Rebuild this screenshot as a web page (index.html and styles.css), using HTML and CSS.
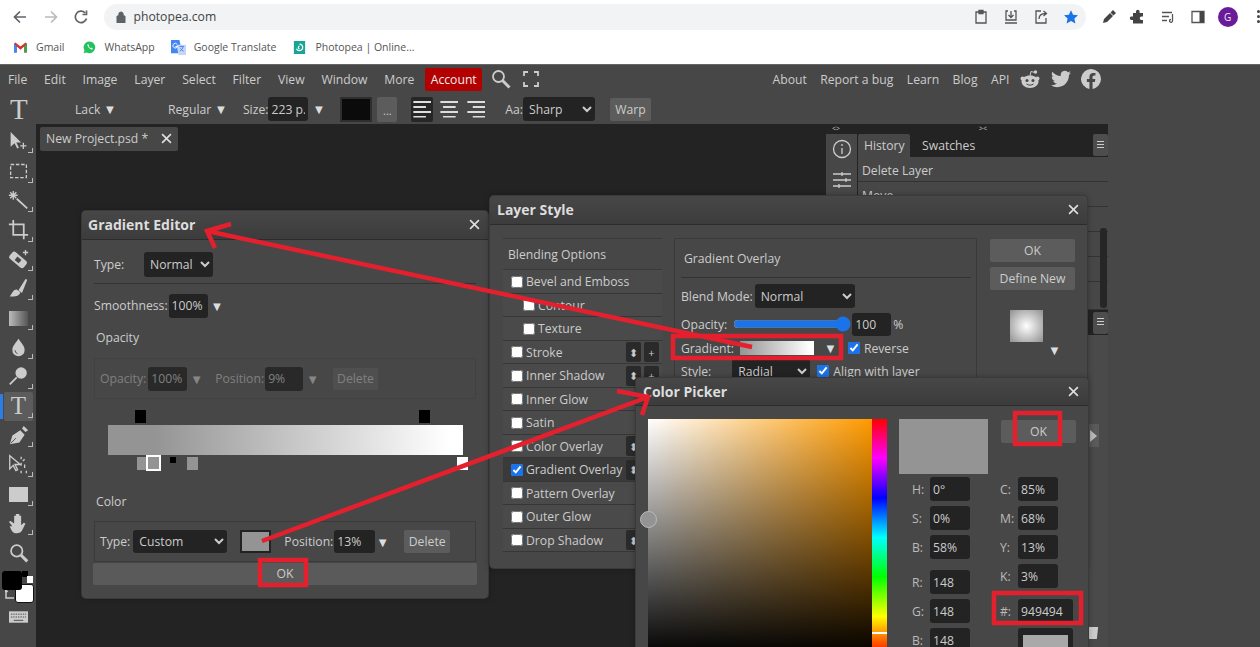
FILE: index.html
```html
<!DOCTYPE html>
<html lang="en">
<head>
<meta charset="utf-8">
<title>Photopea</title>
<link rel="stylesheet" href="styles.css">
</head>
<body>
<div class="page">
  <header class="chrome">
    <div class="navrow">
      <svg class="nav" viewBox="0 0 16 16"><path d="M14 8H3M8 2.500 2.500 8 8 13.500" class="navp"/></svg>
      <svg class="nav nav-off" viewBox="0 0 16 16"><path d="M2 8h11M8 2.500 13.500 8 8 13.500" class="navp"/></svg>
      <svg class="nav" viewBox="0 0 16 16"><path d="M13.500 9.500A5.700 5.700 0 1 1 12 3.800M13.500 1.500v4h-4" class="navp"/></svg>
      <div class="omnibox">
        <svg class="lock" viewBox="0 0 10 12"><path d="M1 5h8v7H1zM2.800 5V3.200a2.200 2.200 0 0 1 4.400 0V5" fill="#5f6368" stroke="#5f6368"/></svg>
        <span class="url">photopea.com</span>
        <span class="grow"></span>
        <svg class="omni-i" viewBox="0 0 16 16"><path d="M3 3h10v11H3zM6 1.500h4v3H6z" class="ico-line"/></svg>
        <svg class="omni-i" viewBox="0 0 16 16"><path d="M5 2H3v9h10V2h-2M8 2v6M5.500 6 8 8.500 10.500 6M2 14h12" class="ico-line"/></svg>
        <svg class="omni-i" viewBox="0 0 16 16"><path d="M8 2H3v12h10V9M6 10c0-4 3-5.500 7-5.500M10.500 2l3 2.500-3 2.500" class="ico-line"/></svg>
        <svg class="omni-i" viewBox="0 0 16 16"><path d="m8 1.200 2.100 4.500 4.900.6-3.600 3.300 1 4.900L8 12.100l-4.400 2.400 1-4.900L1 6.300l4.900-.6z" fill="#1a73e8"/></svg>
      </div>
      <svg class="ext" viewBox="0 0 16 16"><path d="M2 14 3 10l6-6 3 3-6 6zM9.500 3.500 12 1l3 3-2.500 2.500z" fill="#444"/></svg>
      <svg class="ext" viewBox="0 0 16 16"><path d="M6 2.500a1.800 1.800 0 0 1 3.600 0V4H13v3.400h-1.500a1.800 1.800 0 0 0 0 3.600H13v3.500H3V11H1.500a1.800 1.800 0 0 1 0-3.600H3V4h3z" fill="#444"/></svg>
      <svg class="ext" viewBox="0 0 16 16"><path d="M2 3.500h10M2 7.500h7M2 11.500h5M12.500 5v6.500a1.500 1.500 0 1 1-1.500-1.200" class="ico-line"/></svg>
      <svg class="ext" viewBox="0 0 16 16"><path d="M2 2.500h12v11H2z" class="ico-line"/><path d="M9.500 2.500H14v11H9.500z" fill="#444"/></svg>
      <span class="avatar">G</span>
      <span class="dots"><i></i><i></i><i></i></span>
    </div>
    <div class="bookmarks">
      <span class="bm"><svg class="bm-i" viewBox="0 0 14 11"><path d="M0 1.500V11h3V4.500L7 8l4-3.500V11h3V1.500L12.500 0 7 4.500 1.500 0z" fill="#d93025"/><path d="M0 1.500V11h3V4z" fill="#4285f4"/><path d="M14 1.500V11h-3V4z" fill="#34a853"/></svg>Gmail</span>
      <span class="bm bm-wa"><svg class="bm-i" viewBox="0 0 14 14"><path d="M7 .5a6.300 6.300 0 0 0-5.400 9.600L.7 13.300l3.300-.9A6.300 6.300 0 1 0 7 .5z" fill="#25c15f"/><path d="M4.500 4c1 3 2.500 4.500 5.300 5.500l.7-1.500-1.600-1-.8.700C7.200 7.300 6.600 6.600 6 5.700l.7-.8-1-1.500z" fill="#fff"/></svg>WhatsApp</span>
      <span class="bm bm-gt"><svg class="bm-i wide" viewBox="0 0 16 16"><path d="M0 0h9l3 14H0z" fill="#4285f4"/><path d="M6 5h10v11H8z" fill="#c6d6f6"/><path d="M9 7h5M11.500 6v1M13 7c-.5 2-2 4-3.500 5M10 9c1 1.500 2 2.500 3.500 3" stroke="#4285f4" fill="none"/><path d="M6.500 4.500a2.500 2.500 0 1 0 .4 2.500H4.500" stroke="#fff" fill="none"/></svg>Google Translate</span>
      <span class="bm bm-pp"><svg class="bm-i" viewBox="0 0 13 15"><path d="M0 0h13v15H0z" fill="#18a497"/><path d="M6.500 3.500a3.800 3.800 0 1 1-3.500 5.500M6.500 6a1.500 1.500 0 1 0 .1 3" stroke="#fff" stroke-width="1.400" fill="none"/></svg>Photopea | Online...</span>
    </div>
  </header>

  <div class="app">
    <nav class="menu">
      <span class="mi">File</span><span class="mi">Edit</span><span class="mi">Image</span><span class="mi">Layer</span><span class="mi">Select</span><span class="mi">Filter</span><span class="mi">View</span><span class="mi">Window</span><span class="mi">More</span>
      <span class="account">Account</span>
      <svg class="m-search" viewBox="0 0 20 20"><circle cx="7.500" cy="7.500" r="5.500" class="lt-line2"/><path d="m11.500 11.500 7 7" class="lt-line3"/></svg>
      <svg class="m-full" viewBox="0 0 16 16"><path d="M1 5V1h4M11 1h4v4M15 11v4h-4M5 15H1v-4" class="lt-line2"/></svg>
      <span class="grow"></span>
      <span class="mr">About</span><span class="mr">Report a bug</span><span class="mr">Learn</span><span class="mr">Blog</span><span class="mr">API</span>
      <svg class="soc soc-r" viewBox="0 0 20 20"><path d="M10 6.500c-5 0-8.500 2.500-8.500 6S5 19 10 19s8.500-3 8.500-6.500-3.500-6-8.500-6z" fill="#ccc"/><circle cx="2.500" cy="9.500" r="2" fill="#ccc"/><circle cx="17.500" cy="9.500" r="2" fill="#ccc"/><circle cx="15.500" cy="3" r="1.700" fill="#ccc"/><path d="m10 7 1-4.500 4 1" stroke="#ccc" fill="none"/><circle cx="7" cy="11.500" r="1.500" fill="#474747"/><circle cx="13" cy="11.500" r="1.500" fill="#474747"/><path d="M6.500 15c2 1.500 5 1.500 7 0" stroke="#474747" fill="none"/></svg>
      <svg class="soc soc-t" viewBox="0 0 24 24"><path d="M23.950 4.570a10 10 0 0 1-2.820.77 4.960 4.960 0 0 0 2.160-2.720c-.95.550-2 .96-3.130 1.190a4.920 4.920 0 0 0-8.380 4.480C7.690 8.100 4.070 6.130 1.640 3.160a4.820 4.820 0 0 0-.67 2.480c0 1.710.87 3.210 2.190 4.100a4.900 4.900 0 0 1-2.230-.62v.06a4.920 4.920 0 0 0 3.950 4.830 5 5 0 0 1-2.210.08 4.940 4.940 0 0 0 4.600 3.420A9.870 9.870 0 0 1 0 19.540a14 14 0 0 0 7.560 2.210c9.050 0 14-7.500 14-13.980 0-.21 0-.42-.02-.63a9.940 9.940 0 0 0 2.410-2.570z" fill="#ccc"/></svg>
      <svg class="soc soc-f" viewBox="0 0 24 24"><path d="M24 12a12 12 0 1 0-13.880 11.850v-8.380H7.080V12h3.040V9.360c0-3 1.800-4.670 4.530-4.670 1.310 0 2.680.24 2.680.24v2.950h-1.500c-1.500 0-1.960.93-1.960 1.880V12h3.330l-.53 3.470h-2.800v8.380A12 12 0 0 0 24 12z" fill="#ccc"/></svg>
    </nav>

    <div class="options">
      <span class="big-t">T</span>
      <span class="o o-lack">Lack <span class="arr">▼</span></span>
      <span class="o o-reg">Regular <span class="arr">▼</span></span>
      <span class="o o-size">Size:</span>
      <input class="field o-sizeval" value="223 p.">
      <span class="arr tri">▼</span>
      <span class="colorbox"></span>
      <span class="morebtn">...</span>
      <span class="align on"><i class="al l"></i></span>
      <span class="align"><i class="al c"></i></span>
      <span class="align"><i class="al r"></i></span>
      <span class="o o-aa">Aa:</span>
      <select class="sel o-sharp"><option>Sharp</option></select>
      <span class="btn o-warp">Warp</span>
    </div>

    <div class="work">
      <aside class="tools">
        <span class="tool fly"><svg viewBox="0 0 24 24"><path d="M3 1v17l4.500-4 3 6 2-1-3-6H15z" class="f"/><path d="M14 17h7M17.500 13.500v7" class="s"/></svg></span>
        <span class="tool fly"><svg viewBox="0 0 24 24"><path d="M3 4h18v15H3z" class="dash"/></svg></span>
        <span class="tool fly"><svg viewBox="0 0 24 24"><path d="m10 10 12 11" class="s2"/><path d="M6 1v10M1 6h10M2.500 2.500l7 7M9.500 2.500l-7 7" class="s"/></svg></span>
        <span class="tool fly"><svg viewBox="0 0 24 24"><path d="M6 1v17h17M1 6h17v17" class="s2"/></svg></span>
        <span class="tool fly"><svg viewBox="0 0 24 24"><rect x="1" y="7.500" width="21" height="10" rx="3" class="f" transform="rotate(40 11.500 12.500)"/><path d="M8.500 10h6v5h-6z" fill="#474747" transform="rotate(40 11.500 12.500)"/><path d="M20 1v6M17 4h6" class="s"/></svg></span>
        <span class="tool fly"><svg viewBox="0 0 24 24"><path d="M12 14 20 1l2 1-6 15z" class="f"/><path d="M10 13c-4 0-5 4-8 8 6 1 12-1 12-5z" class="f"/></svg></span>
        <span class="tool fly"><span class="gradtool"></span></span>
        <span class="tool fly"><svg viewBox="0 0 24 24"><path d="M12 2c3 5 7 8 7 13a7 7 0 0 1-14 0c0-5 4-8 7-13z" class="f"/><path d="M8 15a4 4 0 0 0 3 4" stroke="#474747" fill="none"/></svg></span>
        <span class="tool fly"><svg viewBox="0 0 24 24"><circle cx="15" cy="8" r="6.500" class="f"/><path d="m10 13-8 8" class="s2"/></svg></span>
        <span class="tool fly active"><span class="t-glyph">T</span></span>
        <span class="tool fly"><svg viewBox="0 0 24 24"><path d="m2 22 3-10 9-6 5 5-6 9zM16 4l2-3 5 5-3 2z" class="f"/><path d="m3 21 6-6" stroke="#474747" fill="none"/></svg></span>
        <span class="tool fly"><svg viewBox="0 0 24 24"><path d="M2 2v15l4-4 3 6 2-1-3-6h6z" class="s"/><path d="M15 3v3M19 6l-2 2M15 10v3M19 12v4M21 19v3M15 19v3" class="s"/></svg></span>
        <span class="tool fly"><span class="recttool"></span></span>
        <span class="tool fly"><svg viewBox="0 0 24 24"><path d="M5 15 1 10l2-1 4 3V3h2v6V1h2v8V1h2v8-6h2v11l3-3 2 1-4 8c-1 2-3 3-6 3-4 0-6-2-8-8z" class="f"/></svg></span>
        <span class="tool"><svg viewBox="0 0 24 24"><circle cx="10" cy="9" r="6.500" class="s2"/><path d="m15 14 7 7" class="s3"/></svg></span>
        <span class="swatches"><i class="sw-fg"></i><i class="sw-bg"></i><i class="sw-mini"></i><i class="sw-mini2"></i><svg class="sw-swap" viewBox="0 0 9 9"><path d="M1 0v8h8M1 0 0 2M1 0l1.500 2" class="s"/></svg></span>
        <span class="tool kb"><svg viewBox="0 0 20 12"><path d="M0 0h20v12H0z" class="f"/><path d="M2 3h16M2 6h16" stroke="#474747" stroke-dasharray="1.500 1" fill="none"/><path d="M5 9.500h10" stroke="#474747" fill="none"/></svg></span>
      </aside>

      <main class="canvas">
        <div class="doc-tab"><span>New Project.psd *</span><svg class="x small" viewBox="0 0 10 10"><path d="m1 1 8 8M9 1 1 9"/></svg></div>
      </main>

      <aside class="dock">
        <div class="dock-top"><span class="tiny t1">&lt;&gt;</span><span class="tiny t2">&gt;&lt;</span></div>
        <div class="dock-main">
          <div class="dock-icons">
            <svg class="di" viewBox="0 0 20 20"><circle cx="10" cy="10" r="8.500" class="lt-line"/><path d="M10 9v6M10 5v2" class="lt-line"/></svg>
            <svg class="di" viewBox="0 0 20 20"><path d="M1 4h18M1 10h18M1 16h18M10 2v4M14 8v4M7 14v4" class="lt-line"/></svg>
          </div>
          <div class="dock-panel">
            <div class="ptabs"><span class="ptab on">History</span><span class="ptab">Swatches</span><span class="grow"></span><span class="pmenu"><i class="burger"></i></span></div>
            <div class="hrow">Delete Layer</div>
            <div class="hrow">Move</div>
            <div class="hrow"></div>
            <div class="hrow"></div>
            <div class="hrow"></div>
            <div class="hrow hrow-tall"></div>
            <div class="hdark"><span class="pmenu"><i class="burger"></i></span></div>
            <div class="lower">
              <span class="expand"><i class="tri-r"></i></span>
              <svg class="trash" viewBox="0 0 14 16"><path d="M1 1h12l-1.500 14h-9z" fill="#ccc"/></svg>
            </div>
            <span class="vscroll"></span>
          </div>
        </div>
      </aside>
    </div>
  </div>

  <section class="win win-grad">
    <div class="win-title"><span>Gradient Editor</span><svg class="x" viewBox="0 0 10 10"><path d="m1 1 8 8M9 1 1 9"/></svg></div>
    <div class="ge-row ge-type"><span class="lab">Type:</span><select class="sel ge-sel"><option>Normal</option></select></div>
    <div class="ge-row ge-smooth"><span class="lab">Smoothness:</span><input class="field w39" value="100%"><span class="arr">▼</span></div>
    <div class="ge-cap cap-op">Opacity</div>
    <div class="fs fs-dim">
      <span class="lab">Opacity:</span><input class="field w39 dim d1" value="100%"><span class="arr">▼</span>
      <span class="lab ml12">Position:</span><input class="field w38 dim" value="9%"><span class="arr">▼</span>
      <span class="btn delbtn">Delete</span>
    </div>
    <div class="gbar-wrap">
      <i class="stop-top st1"></i><i class="stop-top st2"></i>
      <div class="gbar"></div>
      <i class="stop sb1"></i><i class="stop sb2"></i><i class="stop-dot"></i><i class="stop sb3"></i><i class="stop sb4"></i>
    </div>
    <div class="ge-cap cap-col">Color</div>
    <div class="fs fs-col">
      <span class="lab">Type:</span><select class="sel ge-custom"><option>Custom</option></select>
      <span class="ge-sw"></span>
      <span class="lab">Position:</span><input class="field w41" value="13%"><span class="arr">▼</span>
      <span class="btn delbtn2">Delete</span>
    </div>
    <div class="ge-ok">OK</div>
  </section>

  <section class="win win-style">
    <div class="win-title"><span>Layer Style</span><svg class="x" viewBox="0 0 10 10"><path d="m1 1 8 8M9 1 1 9"/></svg></div>
    <div class="ls-body">
      <ul class="fx">
        <li class="fx-head">Blending Options</li>
        <li class="fx-row"><input type="checkbox"><span>Bevel and Emboss</span></li>
        <li class="fx-row sub"><input type="checkbox"><span>Contour</span></li>
        <li class="fx-row sub"><input type="checkbox"><span>Texture</span></li>
        <li class="fx-row"><input type="checkbox"><span>Stroke</span><span class="grow"></span><b class="fb">⬍</b><b class="fb">+</b></li>
        <li class="fx-row"><input type="checkbox"><span>Inner Shadow</span><span class="grow"></span><b class="fb">⬍</b><b class="fb">+</b></li>
        <li class="fx-row"><input type="checkbox"><span>Inner Glow</span></li>
        <li class="fx-row"><input type="checkbox"><span>Satin</span></li>
        <li class="fx-row"><input type="checkbox"><span>Color Overlay</span><span class="grow"></span><b class="fb">⬍</b><b class="fb">+</b></li>
        <li class="fx-row sel-row"><input type="checkbox" checked><span>Gradient Overlay</span><span class="grow"></span><b class="fb">⬍</b><b class="fb">+</b></li>
        <li class="fx-row"><input type="checkbox"><span>Pattern Overlay</span></li>
        <li class="fx-row"><input type="checkbox"><span>Outer Glow</span></li>
        <li class="fx-row"><input type="checkbox"><span>Drop Shadow</span><span class="grow"></span><b class="fb">⬍</b><b class="fb">+</b></li>
      </ul>
      <div class="ls-main">
        <div class="ls-head">Gradient Overlay</div>
        <div class="ls-line l-blend"><span class="lab">Blend Mode:</span><select class="sel ls-mode"><option>Normal</option></select></div>
        <div class="ls-line l-op"><span class="lab">Opacity:</span><input type="range" class="range" min="0" max="100" value="100"><input class="field w39 opv" value="100"><span class="lab pct">%</span></div>
        <div class="ls-line l-gr"><span class="lab">Gradient:</span><span class="mini-grad"></span><span class="arr a-g">▼</span><input type="checkbox" class="c-rev" checked><span class="lab">Reverse</span></div>
        <div class="ls-line l-st"><span class="lab">Style:</span><select class="sel ls-style"><option>Radial</option></select><input type="checkbox" class="c-al" checked><span class="lab">Align with layer</span></div>
      </div>
      <div class="ls-side">
        <span class="btn side-btn">OK</span>
        <span class="btn side-btn">Define New</span>
        <span class="prev"></span>
        <span class="arr a-p">▼</span>
      </div>
    </div>
  </section>

  <section class="win win-pick">
    <div class="win-title"><span>Color Picker</span><svg class="x" viewBox="0 0 10 10"><path d="m1 1 8 8M9 1 1 9"/></svg></div>
    <div class="cp-body">
      <div class="sb"><i class="sb-thumb"></i></div>
      <div class="hue"><i class="hue-mark"></i></div>
      <div class="cp-right">
        <div class="cp-top"><span class="cur"></span><span class="btn cp-ok">OK</span></div>
        <div class="cp-fields">
          <div class="cp-col">
            <label class="cf"><span>H:</span><input class="field w40" value="0°"></label>
            <label class="cf"><span>S:</span><input class="field w40" value="0%"></label>
            <label class="cf"><span>B:</span><input class="field w40" value="58%"></label>
            <label class="cf gap6"><span>R:</span><input class="field w40" value="148"></label>
            <label class="cf"><span>G:</span><input class="field w40" value="148"></label>
            <label class="cf"><span>B:</span><input class="field w40" value="148"></label>
          </div>
          <div class="cp-col col2">
            <label class="cf"><span>C:</span><input class="field w40" value="85%"></label>
            <label class="cf"><span>M:</span><input class="field w40" value="68%"></label>
            <label class="cf"><span>Y:</span><input class="field w40" value="13%"></label>
            <label class="cf"><span>K:</span><input class="field w40" value="3%"></label>
            <label class="cf gap6"><span>#:</span><input class="field w55" value="949494"></label>
            <span class="cf-sw"><i></i></span>
          </div>
        </div>
      </div>
    </div>
  </section>

  <svg class="marks" viewBox="0 0 1260 647" aria-hidden="true">
    <path class="mk" d="M752 347 207 231M231 224 207 231 215 248"/>
    <path class="mk" d="M262 541 648 397M617 391 648 397 642 415"/>
    <rect class="mk" x="673" y="336" width="168" height="22"/>
    <rect class="mk" x="260" y="560" width="46" height="25"/>
    <rect class="mk" x="1015" y="413" width="45" height="31"/>
    <rect class="mk" x="994" y="593" width="87" height="30"/>
  </svg>
</div>
</body>
</html>
```
FILE: styles.css
```css
* { box-sizing: border-box; }
html, body { margin: 0; height: 100%; overflow: hidden; }
body { font: 12.2px "Open Sans", "Liberation Sans", sans-serif; color: #ccc; background: #474747; }
.page { position: relative; width: 1260px; height: 647px; overflow: hidden; }
.grow { flex: 1; }
i { display: block; }

/* browser chrome */
.chrome { height: 64px; background: #fff; color: #555; }
.navrow { display: flex; align-items: center; height: 33px; padding-left: 12px; }
.nav { width: 16px; height: 16px; margin-right: 14.500px; }
.navp { fill: none; stroke: #5f6368; stroke-width: 1.700; }
.nav-off .navp { stroke: #bbb; }
.omnibox { display: flex; align-items: center; width: 982px; height: 26px; border-radius: 13px; background: #f1f3f4; padding: 0 7px 0 12px; }
.lock { width: 10px; height: 12px; margin-right: 8px; }
.url { color: #444; }
.omni-i { width: 16px; height: 16px; margin-left: 14px; }
.ico-line { fill: none; stroke: #555; stroke-width: 1.300; }
.ext { width: 16px; height: 16px; margin-left: 13.700px; }
.omnibox + .ext { margin-left: 15px; }
.avatar { width: 20px; height: 20px; margin-left: 12px; border-radius: 50%; background: #6a1b9a; color: #eee; font-size: 10px; display: flex; align-items: center; justify-content: center; }
.dots { display: flex; flex-direction: column; gap: 2px; margin-left: 19px; }
.dots i { width: 3px; height: 3px; border-radius: 50%; background: #444; }
.bookmarks { display: flex; align-items: center; height: 28px; font-size: 10.500px; color: #555; padding-left: 14px; }
.bm { display: flex; align-items: center; }
.bm-i { width: 13px; height: 13px; margin-right: 9px; }
.bm-i.wide { width: 15px; height: 15px; margin-right: 8px; }
.bm-wa { margin-left: 18px; }
.bm-gt { margin-left: 16px; }
.bm-pp { margin-left: 17px; }

/* app bars */
.app { height: 583px; background: #474747; display: flex; flex-direction: column; border-top: 1px solid #666; }
.menu { display: flex; align-items: center; height: 28px; padding: 0 159px 0 8px; gap: 15.800px; }
.mi, .mr { white-space: nowrap; color: #ccc; }
.mi { margin-right: 1px; }
.mr { margin-right: -2.400px; }
.account { margin-left: -6px; padding: 0 5.500px; height: 23px; line-height: 23px; background: #b30000; color: #eee; border-radius: 2px; }
.m-search { width: 20px; height: 20px; margin-left: -7px; }
.m-full { width: 16px; height: 16px; margin-left: -3.700px; }
.lt-line { fill: none; stroke: #ccc; stroke-width: 1.300; }
.lt-line2 { fill: none; stroke: #ccc; stroke-width: 1.800; }
.lt-line3 { fill: none; stroke: #ccc; stroke-width: 3; }
.soc { width: 20px; height: 20px; }
.soc-r { margin-left: -3px; }
.soc-t { margin-left: -4.700px; }
.soc-f { margin-left: -5.700px; }

.options { display: flex; align-items: center; height: 31px; padding-top: 1px; }
.big-t { font: 29px "Liberation Serif", serif; color: #ccc; width: 40px; padding-left: 10px; }
.o { white-space: nowrap; color: #ccc; }
.o-lack { margin-left: 35px; }
.o-reg { margin-left: 51.500px; }
.o-size { margin-left: 15.700px; }
.tri { margin-left: 4px; }
.field { border: 0; outline: 0; height: 24px; padding: 0 3px; background: #232323; color: #ccc; font: 12.2px "Open Sans", sans-serif; border-radius: 3px; flex: none; }
.o-sizeval { width: 40px; }
.colorbox { width: 32px; height: 25px; margin-left: 15px; background: #0b0b0b; border: 2px solid #2e2e2e; }
.morebtn { width: 20px; height: 25px; margin-left: 5px; background: #5c5c5c; border-radius: 2px; text-align: center; font-size: 11px; line-height: 27px; }
.align { width: 22px; height: 25px; margin-left: 5px; display: flex; align-items: center; justify-content: center; border-radius: 2px; }
.morebtn + .align { margin-left: 14px; background: #262626; }
.al { width: 18px; height: 17px; background: repeating-linear-gradient(#ddd 0 2px, transparent 2px 5px); }
.al.l { clip-path: polygon(0 0,100% 0,100% 18%,0 18%,0 30%,70% 30%,70% 45%,0 45%,0 60%,100% 60%,100% 75%,0 75%,0 88%,70% 88%,70% 100%,0 100%); }
.al.c { clip-path: polygon(0 0,100% 0,100% 18%,85% 18%,85% 45%,100% 45%,100% 75%,85% 75%,85% 100%,15% 100%,15% 75%,0 75%,0 45%,15% 45%,15% 18%,0 18%); }
.al.r { clip-path: polygon(0 0,100% 0,100% 100%,30% 100%,30% 75%,0 75%,0 60%,30% 60%,30% 30%,0 30%,0 18%,0 18%); }
.o-aa { margin-left: 18px; }
.sel { border: 0; outline: 0; height: 24px; background: #232323; color: #ccc; font: 12.2px "Open Sans", sans-serif; border-radius: 3px; padding-left: 2px; flex: none; }
.o-sharp { width: 72px; }
.btn { display: flex; align-items: center; justify-content: center; background: #5c5c5c; color: #ccc; border-radius: 2px; white-space: nowrap; flex: none; }
.o-warp { width: 41px; height: 23px; margin-left: 15px; }
.arr { color: #ddd; font-size: 13px; flex: none; }

/* work area */
.work { flex: 1; display: flex; min-height: 0; }
.tools { width: 36px; display: flex; flex-direction: column; padding: 3px 0 0 4px; background: #474747; position: relative; }
.tool { width: 29px; height: 29.400px; display: flex; align-items: center; justify-content: center; position: relative; flex: none; }
.tool svg { width: 21px; height: 21px; }
.fly::after { content: ""; position: absolute; right: 0; bottom: 3px; width: 4px; height: 4px; border-right: 1px solid #bbb; border-bottom: 1px solid #bbb; }
.f { fill: #ccc; }
.s { fill: none; stroke: #ccc; stroke-width: 1.500; }
.s2 { fill: none; stroke: #ccc; stroke-width: 2; }
.s3 { fill: none; stroke: #ccc; stroke-width: 3.500; }
.dash { fill: none; stroke: #ccc; stroke-width: 1.500; stroke-dasharray: 4 2; }
.gradtool { width: 19px; height: 15px; background: linear-gradient(90deg, #bbb, #555); }
.recttool { width: 19px; height: 15px; background: #ccc; }
.t-glyph { font: 25px "Liberation Serif", serif; color: #ccc; }
.active { background: #5c5c5c; border-radius: 2px; }
.active::before { content: ""; position: absolute; left: -4px; top: 2px; width: 3px; height: 25px; background: #2b7de9; }
.swatches { position: relative; height: 38px; flex: none; }
.sw-fg { position: absolute; left: -2px; top: 3px; width: 20px; height: 19px; background: #000; border-radius: 3px; z-index: 1; }
.sw-bg { position: absolute; left: 11px; top: 16px; width: 19px; height: 19px; background: #fff; border: 1px solid #111; border-radius: 3px; }
.sw-mini { position: absolute; left: 18px; top: 3px; width: 6px; height: 6px; background: #000; }
.sw-mini2 { position: absolute; left: 23px; top: 8px; width: 6px; height: 7px; background: #fff; }
.sw-swap { position: absolute; left: 1px; top: 22px; width: 9px; height: 9px; }
.tool.kb { height: 22px; }
.tool.kb svg { width: 19px; height: 12px; }

.canvas { width: 782px; background: #232323; padding: 3px 0 0 4px; }
.doc-tab { width: 138px; height: 24px; padding: 0 6px 2px; display: flex; align-items: center; justify-content: space-between; background: #474747; border-radius: 2px; }
.x { width: 11px; height: 11px; fill: none; stroke: #ddd; stroke-width: 1.500; flex: none; }
.dock { width: 290px; display: flex; flex-direction: column; background: #232323; }
.dock-top { height: 10px; display: flex; }
.tiny { font-size: 7px; line-height: 10px; color: #ccc; }
.t1 { margin-left: 14px; }
.t2 { margin-left: 139px; }
.dock-main { flex: 1; display: flex; }
.dock-icons { width: 31px; margin-left: 8px; height: 61px; background: #474747; display: flex; flex-direction: column; align-items: center; padding-top: 5px; gap: 11px; }
.di { width: 20px; height: 20px; }
.dock-panel { width: 251px; display: flex; flex-direction: column; position: relative; padding-left: 1px; }
.ptabs { display: flex; align-items: stretch; height: 23px; flex: none; }
.ptab { padding: 0 0 0 12px; line-height: 23px; color: #ccc; }
.ptab.on { width: 52px; padding: 0 0 0 6px; background: #474747; border-radius: 2px 2px 0 0; }
.pmenu { width: 15px; height: 22px; background: #4d4d4d; display: flex; align-items: center; justify-content: center; border-radius: 2px; }
.burger { width: 7px; height: 9px; background: repeating-linear-gradient(#ccc 0 1px, transparent 1px 3px); }
.hrow { height: 25px; flex: none; background: #474747; border-bottom: 1px solid #333; padding-left: 4px; line-height: 27px; overflow: hidden; }
.hrow-tall { height: 28px; }
.hdark { height: 25px; flex: none; background: #232323; display: flex; justify-content: flex-end; align-items: center; }
.lower { flex: 1; background: #4a4a4a; position: relative; }
.expand { position: absolute; right: 9px; top: 89px; width: 11px; height: 23px; background: #5a5a5a; display: flex; align-items: center; justify-content: center; }
.tri-r { width: 0; height: 0; border-left: 7px solid #bbb; border-top: 6px solid transparent; border-bottom: 6px solid transparent; }
.trash { position: absolute; right: 9px; top: 291px; width: 12px; height: 14px; }
.vscroll { position: absolute; right: 1px; top: 94px; width: 7px; height: 80px; background: #262626; border-radius: 3px; }

/* windows */
.win { position: absolute; background: #474747; border-radius: 4px; box-shadow: 0 0 0 1px #3a3a3a, 0 0 6px rgba(0,0,0,.35); }
.win-title { display: flex; align-items: center; justify-content: space-between; height: 29px; padding: 0 8px 1px 6px; background: linear-gradient(#474747, #3c3c3c); border-bottom: 1px solid #2c2c2c; border-radius: 4px 4px 0 0; font-weight: 700; font-size: 14px; color: #ddd; }
.lab { color: #ccc; white-space: nowrap; flex: none; }

.win-grad { left: 82px; top: 211px; width: 406px; height: 387px; padding: 0 12px; }
.win-grad .win-title { margin: 0 -12px; }
.ge-row { display: flex; align-items: center; }
.ge-type { height: 44px; padding-top: 6px; border-bottom: 1px solid #333; }
.ge-type .lab { width: 43px; }
.ge-sel { width: 69px; height: 25px; margin-left: 7px; }
.ge-smooth { height: 43px; }
.ge-smooth .field { margin-left: 1px; }
.ge-smooth .arr { margin-left: 3px; }
.w38 { width: 38px; }
.w39 { width: 39px; }
.w40 { width: 40px; }
.w41 { width: 41px; }
.w55 { width: 55px; }
.ge-cap { padding-left: 2px; line-height: 18px; }
.cap-op { margin-top: 2px; height: 20px; }
.fs { display: flex; align-items: center; height: 41px; border: 1px solid #3a3a3a; padding-left: 5px; }
.fs-dim { margin-top: 9px; opacity: .42; }
.fs-dim .field { margin: 0 3px 0 1px; background: #000; }
.fs-dim .d1 { margin-left: 2px; }
.ml12 { margin-left: 12px; }
.delbtn { width: 45px; height: 22px; margin-left: 14px; }
.gbar-wrap { position: relative; height: 72px; }
.gbar { position: absolute; left: 14px; top: 26px; width: 355px; height: 30px; background: linear-gradient(90deg, #949494 0, #949494 13%, #fff 96%); }
.stop-top { position: absolute; top: 11px; width: 11px; height: 13px; background: #000; }
.st1 { left: 41px; }
.st2 { left: 325px; }
.stop { position: absolute; top: 58px; width: 11px; height: 13px; background: #949494; }
.sb1 { left: 43px; }
.sb2 { left: 52px; top: 56px; width: 15px; height: 16px; border: 2px solid #fff; }
.stop-dot { position: absolute; left: 76px; top: 58px; width: 6px; height: 6px; background: #000; }
.sb3 { left: 93px; }
.sb4 { left: 363px; background: #fff; }
.cap-col { margin-top: 21px; height: 20px; line-height: 20px; }
.fs-col { margin-top: 9px; }
.ge-custom { width: 94px; height: 23px; margin-left: 3px; }
.ge-sw { width: 31px; height: 23px; margin: 0 13px; background: #949494; border: 2px solid #222; flex: none; }
.fs-col .field { height: 23px; margin-left: 1px; }
.fs-col .arr { margin-left: 1px; }
.delbtn2 { width: 46px; height: 23px; margin-left: 15px; }
.ge-ok { height: 22px; margin: 1px -1px 0; background: #5a5a5a; border-radius: 2px; text-align: center; line-height: 22px; color: #ccc; }

.win-style { left: 490px; top: 196px; width: 597px; height: 372px; }
.win-style .win-title { padding-left: 7px; }
.ls-body { display: flex; padding: 13px 0 0 13px; }
.fx { list-style: none; margin: 0; padding: 0; width: 159px; flex: none; }
.fx-head { height: 32px; line-height: 32px; padding-left: 5px; border: solid #3a3a3a; border-width: 1px 0; background: #474747; }
.fx-row { display: flex; align-items: center; height: 23.500px; padding: 1px 0 0 8px; background: #4a4a4a; border-bottom: 1px solid #363636; white-space: nowrap; overflow: hidden; }
.fx-row input { width: 12px; height: 12px; margin: 0 3px 0 0; flex: none; accent-color: #1a73e8; }
.fx-row.sub { padding-left: 20px; }
.sel-row { background: #3a3a3a; }
.fb { width: 15px; height: 20px; margin-right: 3px; background: #2a2a2a; font-weight: 400; font-size: 11px; display: flex; align-items: center; justify-content: center; flex: none; border-radius: 2px; }
.ls-main { width: 303px; margin-left: 12px; height: 330px; border: 1px solid #3a3a3a; border-bottom: 0; padding-left: 6px; flex: none; }
.ls-head { height: 39px; line-height: 39px; padding-left: 3px; border-bottom: 1px solid #333; margin-right: 5px; }
.ls-line { display: flex; align-items: center; }
.l-blend { height: 36px; }
.ls-mode { width: 100px; margin-left: 2px; }
.l-op { height: 20px; }
.range { width: 118px; height: 14px; margin: 0 1px 0 6px; accent-color: #1a73e8; flex: none; }
.opv { height: 23px; }
.pct { margin-left: 2px; }
.l-gr { height: 28px; }
.mini-grad { width: 74px; height: 14px; margin-left: 6px; background: linear-gradient(90deg, #949494 0, #fff 95%); flex: none; }
.a-g { margin-left: 10px; }
.c-rev { margin: 0 4px 0 11px; width: 12px; height: 12px; accent-color: #1a73e8; flex: none; }
.l-st { height: 18px; }
.ls-style { width: 78px; margin-left: 21px; }
.c-al { margin: 0 4px 0 7px; width: 12px; height: 12px; accent-color: #1a73e8; flex: none; }
.ls-side { width: 85px; margin-left: 13px; display: flex; flex-direction: column; align-items: flex-start; padding-top: 1px; gap: 5px; flex: none; position: relative; }
.side-btn { width: 85px; height: 23px; }
.prev { width: 33px; height: 32px; margin: 15px 0 0 20px; background: radial-gradient(circle, #fff 0, #8f8f8f 100%); }
.a-p { position: absolute; left: 58px; top: 103px; }

.win-pick { left: 636px; top: 378px; width: 452px; height: 300px; }
.win-pick .win-title { height: 28px; padding-left: 7px; padding-right: 9px; }
.cp-body { display: flex; padding: 13px 0 0 12px; }
.sb { position: relative; width: 224px; height: 237px; flex: none; background: linear-gradient(#0000, #000), linear-gradient(90deg, #fff, #ff9a00); }
.sb-thumb { position: absolute; left: -8px; top: 92px; width: 17px; height: 17px; border-radius: 50%; background: #949494; border: 1px solid #bbb; }
.hue { position: relative; width: 15px; height: 237px; flex: none; background: linear-gradient(#f00, #f0f 16.6%, #00f 33.3%, #0ff 50%, #0f0 66.6%, #ff0 83.3%, #f00); }
.hue-mark { position: absolute; left: 0; top: 213px; width: 15px; height: 2px; background: #fff; }
.cp-right { width: 189px; margin-left: 12px; flex: none; }
.cp-top { display: flex; align-items: flex-start; }
.cur { width: 89px; height: 55px; background: #949494; flex: none; }
.cp-ok { width: 75px; height: 23px; margin: 1px 0 0 13px; }
.cp-fields { display: flex; margin-top: 3px; }
.cp-col { width: 101px; flex: none; display: flex; flex-direction: column; gap: 5px; padding-left: 13px; }
.col2 { padding-left: 0; }
.cf { display: flex; align-items: center; height: 24px; flex: none; }
.cf span { width: 18px; color: #bbb; flex: none; }
.gap6 { margin-top: 6px; }
.cf-sw { display: block; width: 55px; height: 24px; margin-left: 18px; background: #232323; padding: 7px 5px 0; border-radius: 3px; flex: none; }
.cf-sw i { height: 14px; background: #a9a9a9; }

/* annotations */
.marks { position: absolute; left: 0; top: 0; width: 1260px; height: 647px; pointer-events: none; }
.mk { fill: none; stroke: #e4202e; stroke-width: 4.500; }
```
